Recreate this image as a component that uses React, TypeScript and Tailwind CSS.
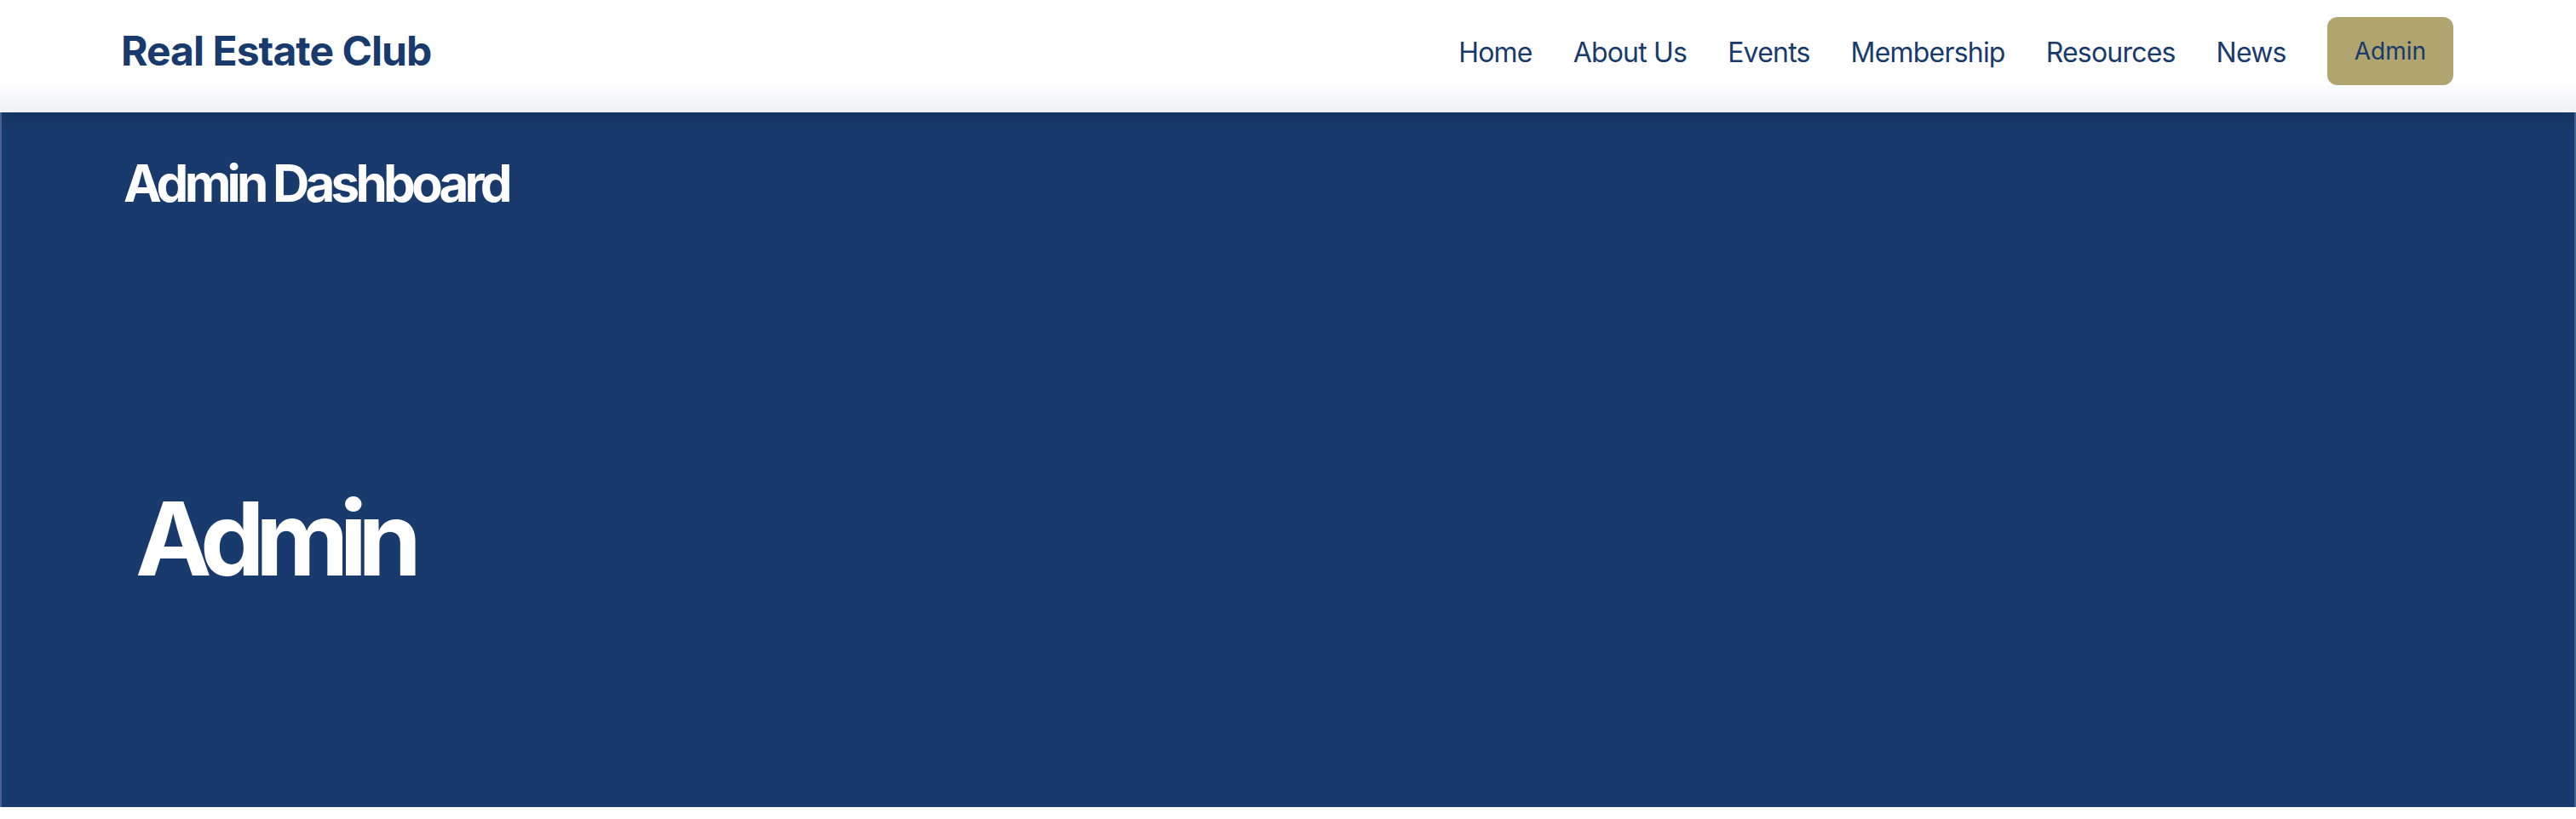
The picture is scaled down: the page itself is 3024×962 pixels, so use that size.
import { Fragment } from 'react';

const navItems = ['Home', 'About Us', 'Events', 'Membership', 'Resources', 'News'];

export default function App() {
  return (
    <div className="min-h-screen bg-white font-['Inter','Liberation_Sans',sans-serif]">
      {/* Top bar */}
      <header className="relative z-10 h-[132px] bg-[linear-gradient(to_bottom,#ffffff_0%,#ffffff_72%,#eff0f3_100%)] shadow-[0_6px_18px_rgba(0,0,0,0.14)]">
        <div className="flex h-[120px] items-center justify-between pl-[142px] pr-[144px]">
          <span className="text-[48px] font-bold leading-none tracking-[-0.02em] text-[#183a6c]">Real Estate Club</span>
          <nav className="flex items-center gap-[48px]">
            {navItems.map((item) => (
              <Fragment key={item}>
                <a className="cursor-pointer pt-[3px] text-[32px] leading-[48px] tracking-[-0.025em] text-[#183a6c]">{item}</a>
              </Fragment>
            ))}
            <button className="h-[80px] rounded-[12px] bg-[#b0a46f] px-[32px] text-[28px] leading-[40px] text-[#183a6c]">
              Admin
            </button>
          </nav>
        </div>
      </header>

      {/* Dashboard panel */}
      <main className="h-[816px] border-x-2 border-[#4a6590] bg-[#183a6c] pl-[143px] pt-[47px]">
        <h1 className="text-[60px] font-bold leading-[72px] tracking-[-0.08em] text-white">Admin Dashboard</h1>
        <div className="pl-[14px] pt-[322px]">
          <h2 className="text-[120px] font-bold leading-none tracking-[-0.09em] text-white">Admin</h2>
        </div>
      </main>
    </div>
  );
}
